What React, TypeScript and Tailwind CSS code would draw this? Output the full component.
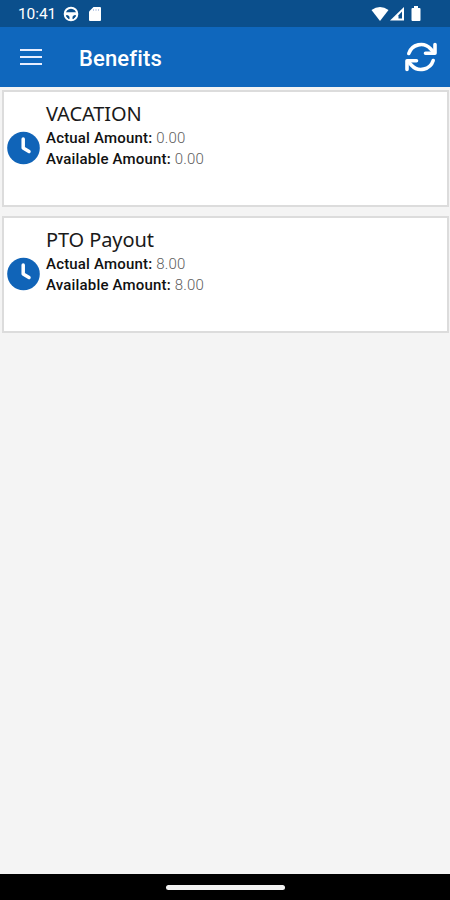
import React from "react";

const benefits = [
  { name: "VACATION", actual: "0.00", available: "0.00" },
  { name: "PTO Payout", actual: "8.00", available: "8.00" },
];

const StatusBar = () => (
  <div className="flex h-[27px] shrink-0 items-center justify-between bg-[#0b4f8c] pl-[18px] pr-[29px] text-white">
    <div className="flex items-center">
      <span className="mt-px w-[45px] text-[15.5px] leading-[27px] tracking-[-0.1px]">10:41</span>
      <svg className="h-4 w-4" viewBox="0 0 16 16" fill="none">
        <circle cx="8" cy="8" r="6.3" stroke="white" strokeWidth="2" />
        <path d="M2 6.2h12v3.1h-3l-1.5 1.5V14h-3v-3.2L5 9.3H2z" fill="white" />
        <path d="M3 9.8h2l1 1.2v2.2z M13 9.8h-2l-1 1.2v2.2z" fill="#0b4f8c" />
      </svg>
      <svg className="ml-[9px] h-4 w-[14px]" viewBox="0 0 14 16">
        <path d="M5.5 1H12q1 0 1 1v12q0 1-1 1H2q-1 0-1-1V5.5z" fill="white" />
        <path d="M5.5 3v2M8 3v2M10.5 3v2" stroke="#9db3d8" strokeWidth=".7" />
      </svg>
    </div>
    <div className="flex items-center">
      <svg className="h-4 w-[18px]" viewBox="0 0 18 16">
        <path d="M.5 4Q9-2 17.500 4L9 15z" fill="white" />
      </svg>
      <svg className="h-4 w-4" viewBox="0 0 16 16">
        <path d="M1 14.500 15 1v13.500z" fill="white" />
        <path d="M9.500 9.200 13 5.500v7H9.500z" fill="#0b4f8c" />
      </svg>
      <svg className="ml-[6px] h-4 w-[10px]" viewBox="0 0 10 16">
        <path d="M3 0h4v2h1.500q1 0 1 1v11q0 1-1 1h-7q-1 0-1-1V3q0-1 1-1H3z" fill="white" />
      </svg>
    </div>
  </div>
);

const Header = () => (
  <header className="flex h-[60px] shrink-0 items-center bg-[#0f67bd] pl-5 pr-[13px] text-white">
    <button aria-label="Menu" className="flex w-[22px] flex-col gap-[5px]">
      <span className="h-[2px] w-full bg-[#e8eeff]" />
      <span className="h-[2px] w-full bg-[#e8eeff]" />
      <span className="h-[2px] w-full bg-[#e8eeff]" />
    </button>
    <h1 className="ml-[37px] mt-[3px] text-[22px] font-medium leading-7 tracking-[0.15px]">Benefits</h1>
    <button aria-label="Refresh" className="ml-auto">
      <svg
        className="h-8 w-8"
        viewBox="0 0 32 32"
        fill="none"
        stroke="white"
        strokeWidth="3.6"
        strokeLinecap="round"
        strokeLinejoin="round"
      >
        <path d="M3.800 12.500A12.800 12.800 0 0 1 25.500 7.800L29 11.600" />
        <path d="M30 3.500v8.700h-9.500" />
        <path d="M28.200 19.500A12.800 12.800 0 0 1 6.500 24.200L3 20.400" />
        <path d="M2 28.500v-8.700h9.500" />
      </svg>
    </button>
  </header>
);

const BenefitCard = ({ name, actual, available }: (typeof benefits)[number]) => (
  <div className="flex h-[117px] border-2 border-[#dcdcdc] bg-white">
    <svg className="ml-[2px] mt-[39px] h-[34px] w-[34px] shrink-0" viewBox="0 0 34 34" fill="none">
      <circle cx="17.500" cy="17" r="16.300" fill="#1064b8" />
      <path d="M17.200 8V17L23 20.500" stroke="white" strokeWidth="3.500" strokeLinecap="round" strokeLinejoin="round" />
    </svg>
    <div className="ml-[6px] pt-[8px]">
      <h2 className="font-['Noto_Sans',sans-serif] text-[20px] leading-[28px] tracking-[-0.1px] text-[#1a1a1a]">{name}</h2>
      <p className="text-[15px] leading-[21px] tracking-[0.18px] text-[#606060]">
        <span className="font-medium text-[#111]">Actual Amount:</span> <span className="font-light">{actual}</span>
      </p>
      <p className="text-[15px] leading-[21px] tracking-[0.18px] text-[#606060]">
        <span className="font-medium text-[#111]">Available Amount:</span> <span className="font-light">{available}</span>
      </p>
    </div>
  </div>
);

export default function App() {
  return (
    <div className="flex h-[900px] w-[450px] flex-col overflow-hidden bg-[#f4f4f4] font-[Roboto,sans-serif]">
      <StatusBar />
      <Header />
      {/* Benefit list */}
      <main className="flex flex-1 flex-col gap-[9px] pl-[2px] pr-[1px] pt-[3px]">
        {benefits.map((benefit) => (
          <BenefitCard key={benefit.name} {...benefit} />
        ))}
      </main>
      {/* Gesture bar */}
      <div className="flex h-[26px] shrink-0 items-center justify-center bg-black">
        <div className="h-[5px] w-[119px] rounded-full bg-[#f2f2f2]" />
      </div>
    </div>
  );
}
